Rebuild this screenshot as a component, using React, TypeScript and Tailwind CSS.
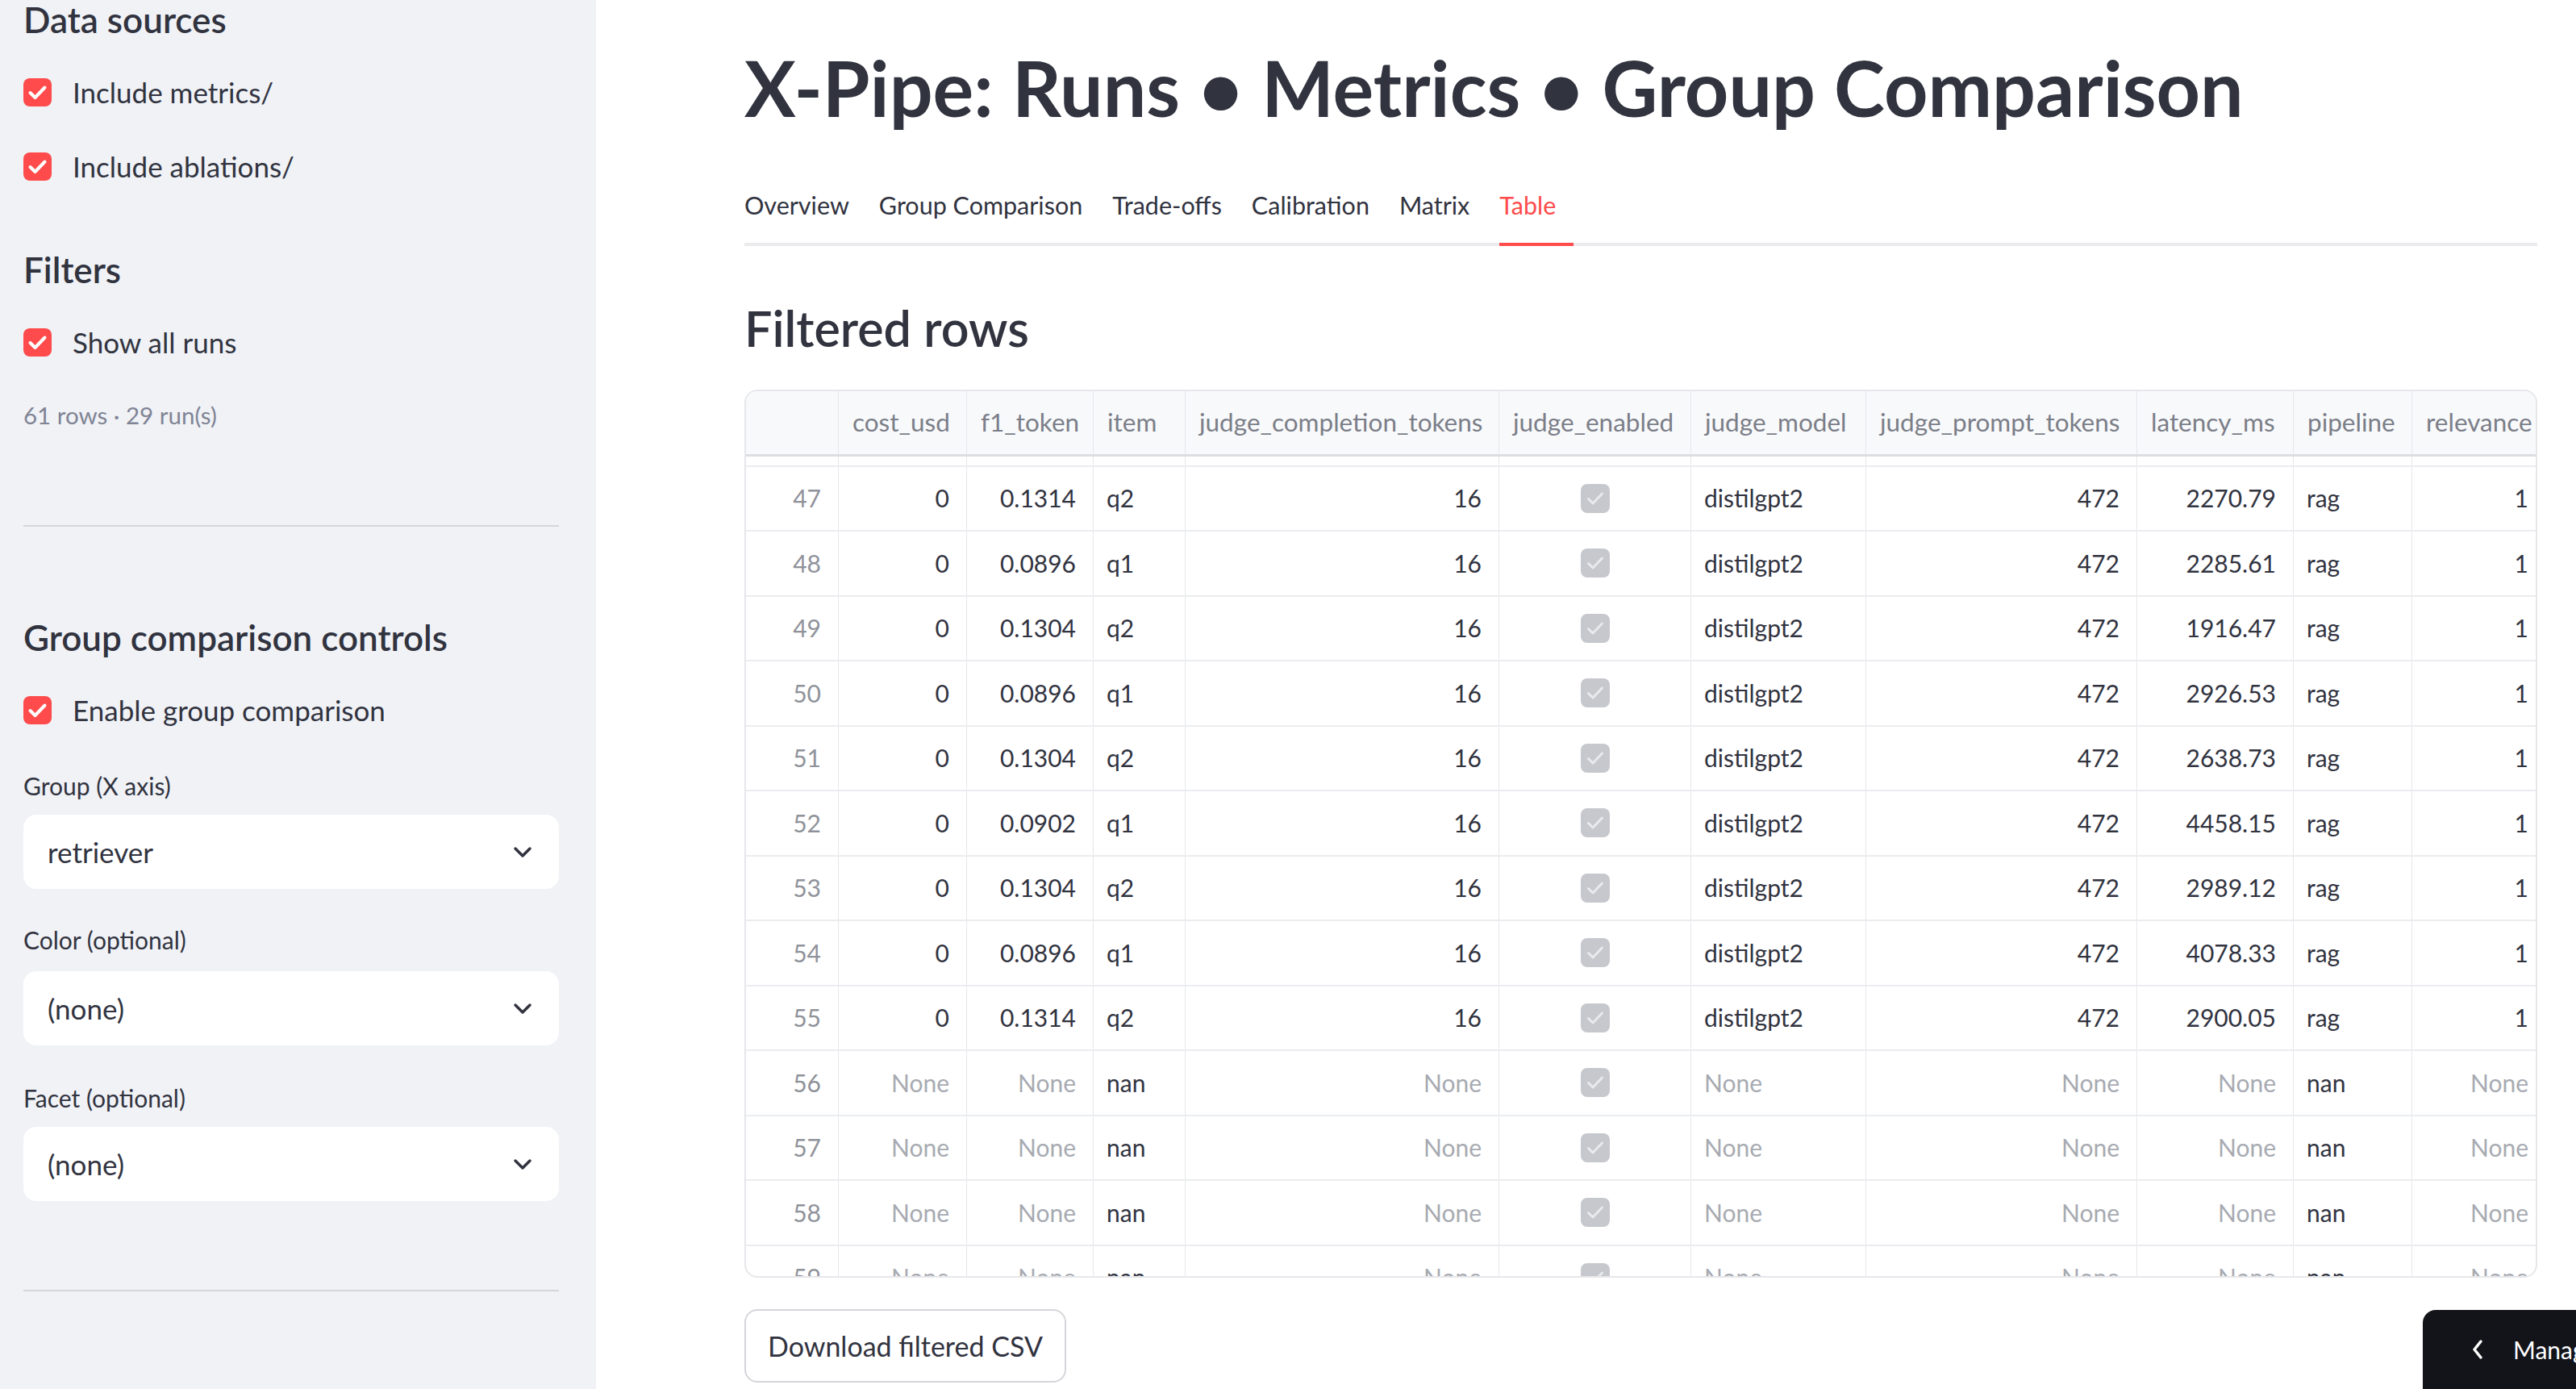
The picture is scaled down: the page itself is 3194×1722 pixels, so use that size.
import React from "react";

const GRID =
  "grid grid-cols-[115px_159px_157px_114px_389px_238px_217px_336px_194px_147px_166px]";

const HEADERS = [
  "",
  "cost_usd",
  "f1_token",
  "item",
  "judge_completion_tokens",
  "judge_enabled",
  "judge_model",
  "judge_prompt_tokens",
  "latency_ms",
  "pipeline",
  "relevance",
];

type Row = {
  idx: number;
  f1?: string;
  item?: string;
  latency?: string;
};

const ROWS: Row[] = [
  { idx: 46, f1: "0.0896", item: "q1", latency: "2311.40" },
  { idx: 47, f1: "0.1314", item: "q2", latency: "2270.79" },
  { idx: 48, f1: "0.0896", item: "q1", latency: "2285.61" },
  { idx: 49, f1: "0.1304", item: "q2", latency: "1916.47" },
  { idx: 50, f1: "0.0896", item: "q1", latency: "2926.53" },
  { idx: 51, f1: "0.1304", item: "q2", latency: "2638.73" },
  { idx: 52, f1: "0.0902", item: "q1", latency: "4458.15" },
  { idx: 53, f1: "0.1304", item: "q2", latency: "2989.12" },
  { idx: 54, f1: "0.0896", item: "q1", latency: "4078.33" },
  { idx: 55, f1: "0.1314", item: "q2", latency: "2900.05" },
  { idx: 56 },
  { idx: 57 },
  { idx: 58 },
  { idx: 59 },
];

function RedCheck() {
  return (
    <svg width="35" height="35" viewBox="0 0 35 35" className="shrink-0">
      <rect width="35" height="35" rx="8" fill="#ff4b4b" />
      <path
        d="M8.5 18 L14.5 24 L26.5 11.5"
        fill="none"
        stroke="white"
        strokeWidth="4"
        strokeLinecap="round"
        strokeLinejoin="round"
      />
    </svg>
  );
}

function GrayCheck() {
  return (
    <svg width="36" height="36" viewBox="0 0 36 36">
      <rect width="36" height="36" rx="8" fill="#c6c8cd" />
      <path
        d="M9.5 18.5 L15 24 L26.5 12"
        fill="none"
        stroke="#e9eaed"
        strokeWidth="3"
        strokeLinecap="round"
        strokeLinejoin="round"
      />
    </svg>
  );
}

function Chevron() {
  return (
    <svg width="24" height="15" viewBox="0 0 24 15">
      <path
        d="M3 3 L12 12 L21 3"
        fill="none"
        stroke="#31333f"
        strokeWidth="3.5"
        strokeLinecap="round"
        strokeLinejoin="round"
      />
    </svg>
  );
}

function Checkbox({ label, className }: { label: string; className: string }) {
  return (
    <div className={`h-[50px] shrink-0 flex items-center gap-[26px] ${className}`}>
      <RedCheck />
      <span className="text-[35px] text-[#31333f]">{label}</span>
    </div>
  );
}

function Select({ value, className }: { value: string; className: string }) {
  return (
    <div
      className={`h-[92px] shrink-0 rounded-[16px] bg-white flex items-center justify-between pl-[30px] pr-[33px] ${className}`}
    >
      <span className="text-[35px] text-[#31333f]">{value}</span>
      <Chevron />
    </div>
  );
}

function Sidebar() {
  return (
    <aside className="w-[739px] shrink-0 h-full bg-[#f0f2f6] pl-[29px] pr-[46px] flex flex-col overflow-hidden">
      <h2 className="mt-[-6px] h-[60px] shrink-0 leading-[60px] text-[44px] font-semibold text-[#31333f]">
        Data sources
      </h2>
      <Checkbox label="Include metrics/" className="mt-[35px]" />
      <Checkbox label="Include ablations/" className="mt-[42px]" />
      <h2 className="mt-[73px] h-[60px] shrink-0 leading-[60px] text-[44px] font-semibold text-[#31333f]">
        Filters
      </h2>
      <Checkbox label="Show all runs" className="mt-[35px]" />
      <p className="mt-[44px] h-[44px] shrink-0 leading-[44px] text-[29.5px] text-[#808495]">
        61 rows · 29 run(s)
      </p>
      <div className="mt-[114px] h-[2px] shrink-0 bg-[#d5d6da]" />
      <h2 className="mt-[107px] h-[60px] shrink-0 leading-[60px] text-[44px] font-semibold text-[#31333f]">
        Group comparison controls
      </h2>
      <Checkbox label="Enable group comparison" className="mt-[35px]" />
      <p className="mt-[49px] h-[40px] shrink-0 leading-[40px] text-[30px] text-[#31333f]">
        Group (X axis)
      </p>
      <Select value="retriever" className="mt-[16px]" />
      <p className="mt-[43px] h-[40px] shrink-0 leading-[40px] text-[30px] text-[#31333f]">
        Color (optional)
      </p>
      <Select value="(none)" className="mt-[19px]" />
      <p className="mt-[45px] h-[40px] shrink-0 leading-[40px] text-[30px] text-[#31333f]">
        Facet (optional)
      </p>
      <Select value="(none)" className="mt-[16px]" />
      <div className="mt-[110px] h-[2px] shrink-0 bg-[#d5d6da]" />
    </aside>
  );
}

function Tabs() {
  const tabs = ["Overview", "Group Comparison", "Trade-offs", "Calibration", "Matrix"];
  return (
    <div className="mt-[57px] shrink-0 flex gap-[37px] border-b-[4px] border-[#ebebee]">
      {tabs.map((t) => (
        <div
          key={t}
          className="h-[85px] pb-[11px] mb-[-4px] border-b-[4px] border-transparent flex items-center text-[30.5px] text-[#31333f]"
        >
          {t}
        </div>
      ))}
      <div className="h-[85px] pb-[11px] pr-[22px] mb-[-4px] border-b-[4px] border-[#ff4b4b] flex items-center text-[30.5px] text-[#ff4b4b]">
        Table
      </div>
    </div>
  );
}

function Num({ v, none }: { v: string; none?: boolean }) {
  return (
    <div
      className={
        none
          ? "flex items-center justify-end pr-[21px] border-r border-[#e6e7ea] text-[#a7aab1]"
          : "flex items-center justify-end pr-[21px] border-r border-[#e6e7ea] text-[#31333f]"
      }
    >
      {v}
    </div>
  );
}

function Txt({ v, none }: { v: string; none?: boolean }) {
  return (
    <div
      className={
        none
          ? "flex items-center pl-[16px] border-r border-[#e6e7ea] text-[#a7aab1]"
          : "flex items-center pl-[16px] border-r border-[#e6e7ea] text-[#31333f]"
      }
    >
      {v}
    </div>
  );
}

function TableRow({ r, first }: { r: Row; first: boolean }) {
  const empty = r.f1 === undefined;
  return (
    <div
      className={`${GRID} h-[80.5px] shrink-0 border-b-2 border-[#ebecef] text-[30px] ${
        first ? "mt-[-68px]" : ""
      }`}
    >
      <div className="flex items-center justify-end pr-[21px] border-r border-[#e6e7ea] text-[#8f929a]">
        {r.idx}
      </div>
      {empty ? <Num v="None" none /> : <Num v="0" />}
      {empty ? <Num v="None" none /> : <Num v={r.f1!} />}
      {empty ? <Txt v="nan" /> : <Txt v={r.item!} />}
      {empty ? <Num v="None" none /> : <Num v="16" />}
      <div className="flex items-center justify-center border-r border-[#e6e7ea]">
        <GrayCheck />
      </div>
      {empty ? <Txt v="None" none /> : <Txt v="distilgpt2" />}
      {empty ? <Num v="None" none /> : <Num v="472" />}
      {empty ? <Num v="None" none /> : <Num v={r.latency!} />}
      {empty ? <Txt v="nan" /> : <Txt v="rag" />}
      {empty ? <Num v="None" none /> : <Num v="1" />}
    </div>
  );
}

function DataTable() {
  return (
    <div className="mt-[41px] h-[1101px] shrink-0 rounded-[16px] border-2 border-[#e6e7ea] overflow-hidden flex flex-col">
      <div className={`${GRID} h-[81px] shrink-0 bg-[#f8f9fb] border-b-[3px] border-[#dcdde1] text-[31.5px] text-[#7b7e88]`}>
        {HEADERS.map((h, i) => (
          <div key={i} className="flex items-center pl-[17px] border-r border-[#e6e7ea] whitespace-nowrap overflow-hidden">
            {h}
          </div>
        ))}
      </div>
      <div className="flex-1 overflow-hidden flex flex-col">
        {ROWS.map((r, i) => (
          <TableRow key={r.idx} r={r} first={i === 0} />
        ))}
      </div>
    </div>
  );
}

export default function App() {
  return (
    <div className="relative w-full h-[1722px] flex overflow-hidden bg-white [font-family:Lato,'Noto_Sans',sans-serif]">
      <Sidebar />
      <main className="flex-1 min-w-0 h-full pl-[184px] pr-[48px] flex flex-col overflow-hidden">
        <h1 className="mt-[53px] h-[110px] shrink-0 leading-[110px] text-[95px] font-bold text-[#31333f] whitespace-nowrap">
          X-Pipe: Runs • Metrics • Group Comparison
        </h1>
        <Tabs />
        <h3 className="mt-[67px] h-[70px] shrink-0 leading-[70px] text-[61px] font-semibold text-[#31333f]">
          Filtered rows
        </h3>
        <DataTable />
        <div className="mt-[39px] w-[399px] h-[91px] shrink-0 rounded-[16px] border-2 border-[#d5d6da] bg-white flex items-center justify-center text-[34px] text-[#31333f]">
          Download filtered CSV
        </div>
      </main>
      <div className="absolute right-0 bottom-0 w-[190px] h-[98px] rounded-tl-[16px] bg-[#131419] flex items-center pl-[60px] gap-[36px] whitespace-nowrap">
        <svg width="16" height="26" viewBox="0 0 16 26" className="shrink-0">
          <path d="M12 3 L4 13 L12 23" fill="none" stroke="white" strokeWidth="3.5" strokeLinecap="round" strokeLinejoin="round" />
        </svg>
        <span className="text-[30px] text-white">Manage app</span>
      </div>
    </div>
  );
}
